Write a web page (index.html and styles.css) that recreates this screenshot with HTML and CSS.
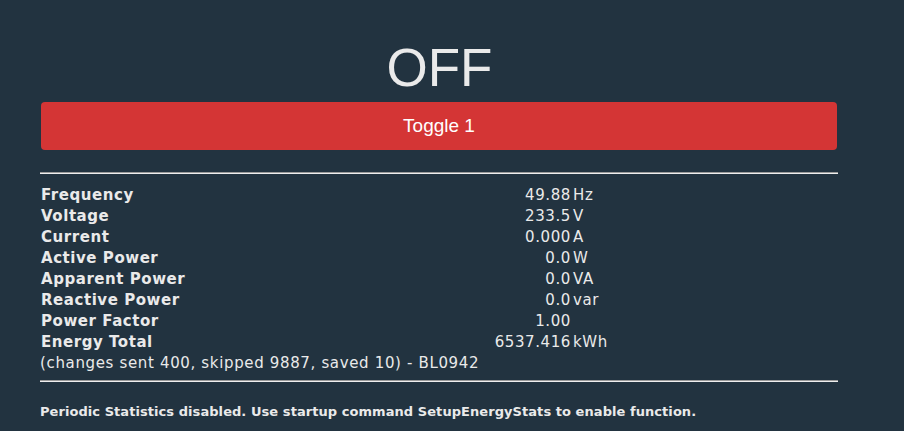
FILE: index.html
```html
<!DOCTYPE html>
<html>
<head>
<meta charset="utf-8">
<link rel="stylesheet" href="styles.css">
</head>
<body>
<div class="page">
  <div class="state">OFF</div>
  <button class="toggle">Toggle 1</button>
  <hr class="rule">
  <div class="stats">
    <div class="lbl">Frequency</div><div class="val">49.88</div><div class="unit">Hz</div>
    <div class="lbl">Voltage</div><div class="val">233.5</div><div class="unit">V</div>
    <div class="lbl">Current</div><div class="val">0.000</div><div class="unit">A</div>
    <div class="lbl">Active Power</div><div class="val">0.0</div><div class="unit">W</div>
    <div class="lbl">Apparent Power</div><div class="val">0.0</div><div class="unit">VA</div>
    <div class="lbl">Reactive Power</div><div class="val">0.0</div><div class="unit">var</div>
    <div class="lbl">Power Factor</div><div class="val">1.00</div><div class="unit"></div>
    <div class="lbl">Energy Total</div><div class="val">6537.416</div><div class="unit">kWh</div>
  </div>
  <div class="note">(changes sent 400, skipped 9887, saved 10) - BL0942</div>
  <hr class="rule rule-tight">
  <p class="footer">Periodic Statistics disabled. Use startup command SetupEnergyStats to enable function.</p>
</div>
</body>
</html>
```
FILE: styles.css
```css
html, body {
  margin: 0;
  padding: 0;
  background: #223340;
  color: #eaeaea;
}
body {
  font-family: "DejaVu Sans", Verdana, sans-serif;
}
.page {
  width: 798px;
  margin-left: 40px;
  padding-top: 36px;
}
.state {
  font-family: "Liberation Sans", Arial, sans-serif;
  font-size: 53px;
  line-height: 64px;
  text-align: center;
  color: #eaeaea;
  margin-left: 1px;
}
.toggle {
  display: block;
  width: 796px;
  height: 48px;
  margin: 2px 0 0 1px;
  border: 0;
  border-radius: 4px;
  background: #d43535;
  color: #ffffff;
  font-family: "Liberation Sans", Arial, sans-serif;
  font-size: 19px;
  padding: 0;
}
.rule {
  margin: 22px 0 0 0;
  border: 0;
  border-top: 1px solid #9a9a9a;
  border-bottom: 1px solid #eeeeee;
  height: 0;
}
.rule-tight {
  margin-top: 6px;
}
.stats {
  display: grid;
  grid-template-columns: 449px 81px 1fr;
  margin-top: 11px;
  margin-left: 1px;
  font-size: 15px;
  line-height: 21px;
  letter-spacing: 0.6px;
}
.lbl {
  font-weight: bold;
  letter-spacing: 0.55px;
}
.val {
  text-align: right;
  letter-spacing: 0.6px;
}
.unit {
  padding-left: 2px;
}
.note {
  font-size: 15px;
  line-height: 21px;
  letter-spacing: 0.65px;
}
.footer {
  margin: 22px 0 0 0;
  font-size: 13px;
  font-weight: bold;
  letter-spacing: 0.06px;
  font-family: "DejaVu Sans", Verdana, sans-serif;
}
```
